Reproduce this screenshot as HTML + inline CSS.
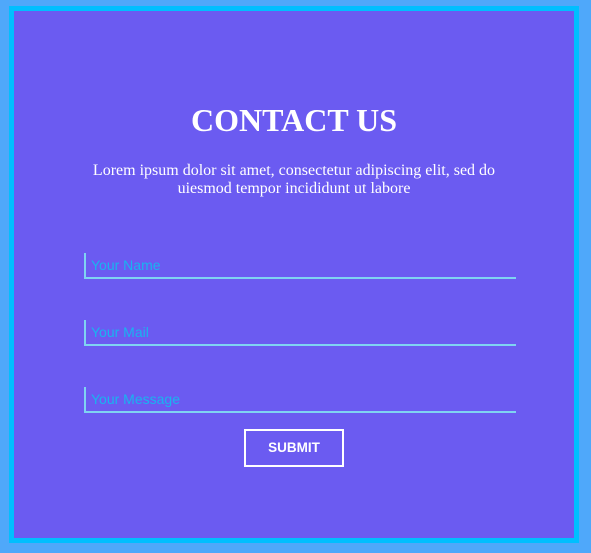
<!DOCTYPE html>
<html><head><style>
html,body{margin:0;padding:0;width:591px;height:553px;background:#4fa8fa;overflow:hidden}
.box{position:absolute;left:9px;top:6px;width:560px;height:527px;border:5px solid #00bfff;background:#6b5bf1}
h1{position:absolute;left:0;width:560px;top:91px;margin:0;text-align:center;font:bold 32px "Liberation Serif",serif;color:#fff;line-height:36px}
p{position:absolute;left:70px;width:420px;top:151px;margin:0;text-align:center;font:16px "Liberation Serif",serif;color:#fff;line-height:18px}
.in{position:absolute;left:70px;width:425px;height:24px;border-left:2px solid #7fd3f2;border-bottom:2px solid #7fd3f2;font:14px "Liberation Sans",sans-serif;color:#18b4f0;line-height:25px;padding-left:5px;box-sizing:content-box}
.btn{position:absolute;left:230px;top:418px;width:96px;height:34px;border:2px solid #fff;color:#fff;font:bold 13.5px "Liberation Sans",sans-serif;text-align:center;line-height:34px}
</style></head><body>
<div class="box">
<h1>CONTACT US</h1>
<p>Lorem ipsum dolor sit amet, consectetur adipiscing elit, sed do uiesmod tempor incididunt ut labore</p>
<div class="in" style="top:242px">Your Name</div>
<div class="in" style="top:309px">Your Mail</div>
<div class="in" style="top:376px">Your Message</div>
<div class="btn">SUBMIT</div>
</div>
</body></html>
